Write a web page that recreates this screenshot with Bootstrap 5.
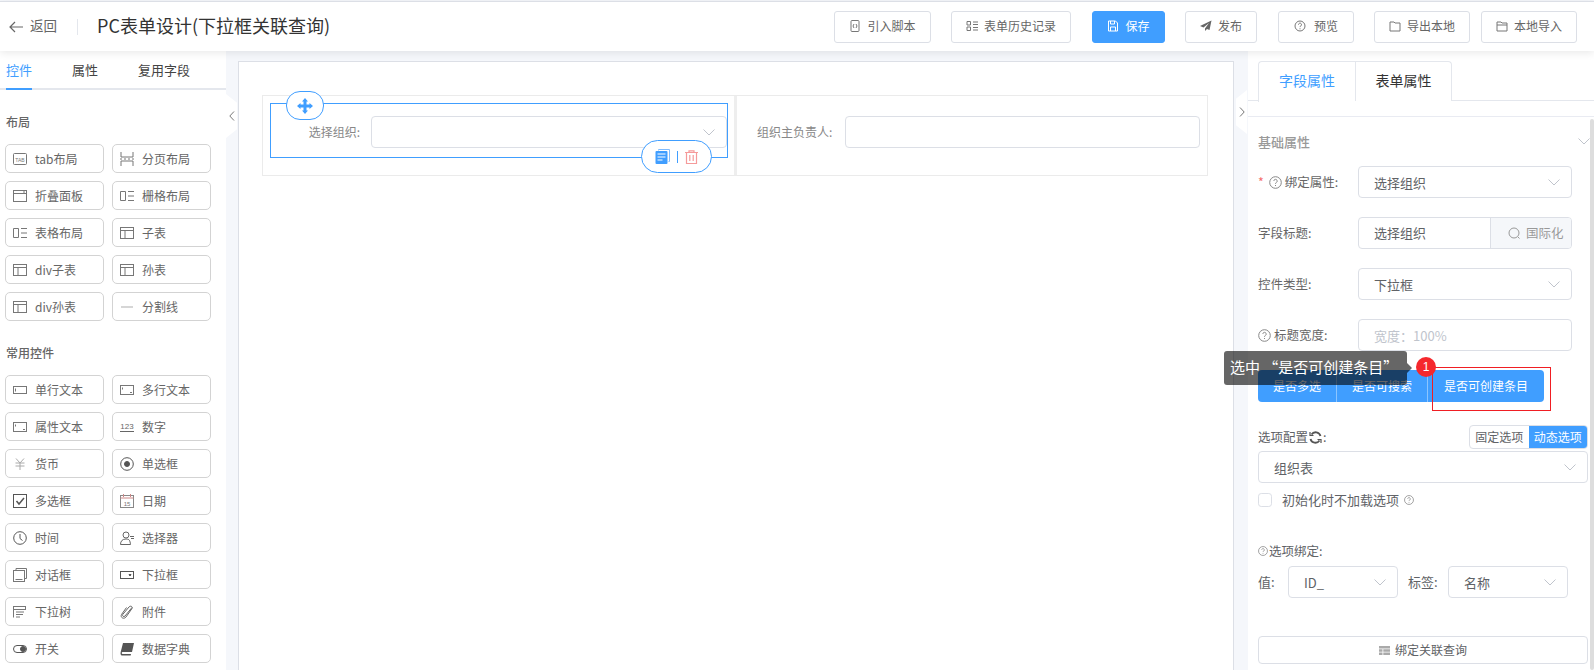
<!DOCTYPE html>
<html lang="zh">
<head>
<meta charset="utf-8">
<title>PC表单设计</title>
<link href="https://cdn.jsdelivr.net/npm/bootstrap@5.3.0/dist/css/bootstrap.min.css" rel="stylesheet">
<style>
html,body{height:670px;overflow:hidden}
body{font-family:"Noto Sans CJK SC","Liberation Sans",sans-serif;font-size:13px;color:#606266;background:#f5f7fb}
svg{display:block;flex:none}
.ic{width:14px;height:14px;fill:none;stroke:#777;stroke-width:1}
.topbar{height:50px;margin-top:1px;border-top:1px solid #dcdfe6;background:#fff;box-shadow:0 2px 8px rgba(0,0,0,.09);position:relative;z-index:3;padding-left:9px;padding-right:17px}
.back-txt{font-size:13.5px;color:#666;margin-left:7px;margin-bottom:2px}
.vsep{width:1px;height:16px;background:#e4e7ed;margin:0 20px 0 20px}
.page-title{font-size:18px;color:#333;font-weight:400;margin:0 0 3px -1px;line-height:24px}
.hbtn{height:32px;font-size:12px;color:#666;background:#fff;border:1px solid #dcdfe6;border-radius:3px;padding:0 0 2px;display:flex;align-items:center;justify-content:center;gap:6px;line-height:1}
.hbtn.act{background:#409eff;border-color:#409eff;color:#fff}
.hbtn .ic{width:12px;height:12px}
.workspace{height:619px;position:relative}
.leftp{width:226px;background:#fff;overflow:hidden;flex:none}
.ltabs{height:39px;border-bottom:2px solid #e4e7ed;padding-left:6px;gap:40px;font-size:13px}
.ltab{height:39px;line-height:38px;color:#444;margin-bottom:-2px}
.ltab.on{color:#409eff;border-bottom:2px solid #409eff}
.sec-h{font-size:12px;font-weight:500;color:#666;padding-left:6px;line-height:18px}
.wgrid{display:grid;grid-template-columns:99px 99px;column-gap:8px;row-gap:8px;padding-left:5px}
.wbtn{height:29px;border:1px solid #d3d3d3;border-radius:5px;display:flex;align-items:center;gap:8px;padding-left:7px;font-size:12px;color:#666;background:#fff}
.midp{flex:1 1 auto;padding:10px 14px 0 12px;min-width:0}
.canvas{height:640px;background:#fff;border:1px solid #dcdfe6;padding:33px 25px 0 23px}
.frow{height:81px;border:1px solid #ebebeb;position:relative}
.fcell{padding-top:20px}
.fcell.c1{width:474px;border-right:3px solid #eee;padding-right:0}
.flabel{font-size:12px;color:#888;text-align:right;white-space:nowrap}
.box{height:32px;border:1px solid #dcdfe6;border-radius:4px;background:#fff;display:flex;align-items:center;justify-content:space-between;padding:0 11px 0 15px;font-size:13px;color:#606266;line-height:1}
.chev{width:12px;height:7px;fill:none;stroke:#c0c4cc;stroke-width:1}
.selrect{position:absolute;left:7px;top:7px;width:458px;height:55px;border:1px solid #409eff;pointer-events:none}
.pill{position:absolute;background:#fff;border:1px solid #409eff;border-radius:14px;display:flex;align-items:center;justify-content:center}
.pill.mv{left:23px;top:-5px;width:38px;height:29px}
.pill.acts{left:378px;top:44px;width:71px;height:33px;border-radius:17px;gap:7px}
.pill .bar{width:1px;height:12px;background:#409eff}
.rightp{width:346px;flex:none;background:#fff;position:relative;overflow:hidden}
.rtabs{height:50px;border-bottom:1px solid #e4e7ed;padding:10px 0 0 10px}
.rtab{width:97px;height:40px;border:1px solid #e4e7ed;border-bottom:0;font-size:14px;text-align:center;line-height:37px;color:#333;background:#fff}
.rtab.on{color:#409eff;border-radius:4px 0 0 0;border-right:0;height:41px}
.rtab.two{border-radius:0 4px 0 0}
.rbody{margin-top:15px;border-top:1px solid #e9ebf2;padding:0 0 0 10px;position:relative}
.rhead{height:49px;font-size:13px;font-weight:500;color:#999;padding-right:4px}
.frm{height:32px;margin-bottom:19px}
.frm .lb{width:100px;font-size:12.5px;color:#666;flex:none;gap:3px}
.frm .box{width:214px}
.req{color:#f56c6c;margin-right:2px}
.q{width:13px;height:13px;fill:none;stroke:#888;stroke-width:1}
.grp{width:214px;height:32px;border:1px solid #dcdfe6;border-radius:4px;overflow:hidden}
.grp .val{flex:1 1 auto;padding-left:15px;color:#606266}
.grp .i18n{width:81px;background:#f5f7fa;border-left:1px solid #dcdfe6;color:#999;font-size:12.5px;gap:5px;padding-left:17px}
.ph{color:#c0c4cc}
.bgrp{height:32px;width:286px;border-radius:4px;overflow:hidden}
.bgrp .it{height:32px;background:#409eff;color:#fff;font-size:12px;display:flex;align-items:center;justify-content:center;padding:0}
.bdiv{border-right:1px solid #8cc5ff !important}
.seg{height:24px;border:1px solid #dcdfe6;border-radius:4px;overflow:hidden;font-size:12px;width:119px}
.seg span{flex:1;text-align:center;line-height:22px;color:#606266}
.seg span.on{background:#409eff;color:#fff}
.wide{width:330px}
.chk{width:14px;height:14px;border:1px solid #dcdfe6;border-radius:2px;margin:0 !important;flex:none}
.bindbtn{width:330px;height:28px;border:1px solid #dcdfe6;border-radius:4px;background:#fff;font-size:12px;color:#606266;display:flex;align-items:center;justify-content:center;gap:5px;padding:0;margin-top:37px}
.sbar{position:absolute;right:0;top:68px;bottom:0;width:4px;background:#ddd;border-radius:2px}
.handle{position:absolute;width:11px;height:44px;background:#fff;z-index:2;display:flex;align-items:center;justify-content:center}
.handle.l{left:226px;top:43px;clip-path:polygon(0 0,100% 20%,100% 80%,0 100%)}
.handle.r{left:1236px;top:39px;clip-path:polygon(0 20%,100% 0,100% 100%,0 80%)}
.handle svg{width:6px;height:10px;fill:none;stroke:#777;stroke-width:1}
.tip{position:absolute;left:1224px;top:300px;width:183px;height:34px;background:rgba(0,0,0,.6);color:#fff;font-size:15px;border-radius:3px;padding-left:6px;line-height:31px;z-index:5;white-space:nowrap}
.tip::after{content:"";position:absolute;right:-5px;top:12px;border-left:5px solid rgba(0,0,0,.6);border-top:5px solid transparent;border-bottom:5px solid transparent}
.step{position:absolute;left:1416px;top:306px;width:20px;height:20px;border-radius:50%;background:#f5282d;color:#fff;font-size:12px;text-align:center;line-height:20px;z-index:6;font-family:"Liberation Sans",sans-serif}
.redbox{position:absolute;left:1432px;top:316px;width:119px;height:44px;border:1px solid #f01e23;z-index:5;pointer-events:none}
</style>
</head>
<body>
<header class="topbar d-flex align-items-center">
  <svg width="14" height="12" viewBox="0 0 14 12" style="fill:none;stroke:#666;stroke-width:1.2"><path d="M6 1 1 6l5 5M1 6h13"/></svg>
  <span class="back-txt">返回</span>
  <span class="vsep"></span>
  <h1 class="page-title">PC表单设计(下拉框关联查询)</h1>
  <div class="ms-auto d-flex">
    <button class="btn hbtn" style="width:97px"><svg class="ic" viewBox="0 0 12 12"><rect x="2" y=".5" width="8" height="11" rx="1"/><path d="M5 4l-1 2 1 2M7 4l1 2-1 2"/></svg>引入脚本</button>
    <button class="btn hbtn" style="width:120px;margin-left:20px"><svg class="ic" viewBox="0 0 12 12"><path d="M1 1.500h3.500v3.500H1zM1 7h3.500v3.500H1zM7 2h5M7 4.500h5M7 7.500h5M7 10h5"/></svg>表单历史记录</button>
    <button class="btn hbtn act" style="width:73px;margin-left:21px"><svg class="ic" viewBox="0 0 12 12" style="stroke:#fff"><path d="M1.500 1h7l2 2v8h-9z"/><path d="M3.500 1v3h4V1M3.500 11V7h5v4"/></svg>保存</button>
    <button class="btn hbtn" style="width:72px;margin-left:20px"><svg class="ic" viewBox="0 0 12 12" style="fill:#666;stroke:none"><path d="M11.500.5 0 6l3.500 1.500L9 3 5 8.500V11l2-2 2.500 1z"/></svg>发布</button>
    <button class="btn hbtn" style="width:76px;margin-left:21px;gap:8px"><svg class="ic" viewBox="0 0 12 12"><circle cx="6" cy="6" r="5"/><path d="M4.500 4.600a1.500 1.500 0 1 1 2.300 1.300c-.5.300-.8.600-.8 1.200M6 8.300v1"/></svg>预览</button>
    <button class="btn hbtn" style="width:96px;margin-left:20px"><svg class="ic" viewBox="0 0 12 12"><path d="M1 2h4l1 1h5v8H1z"/></svg>导出本地</button>
    <button class="btn hbtn" style="width:96px;margin-left:11px"><svg class="ic" viewBox="0 0 12 12"><path d="M1 2h4l1 1h5v8H1zM1 5h10"/></svg>本地导入</button>
  </div>
</header>

<main class="workspace d-flex">
  <aside class="leftp">
    <div class="ltabs d-flex">
      <div class="ltab on">控件</div>
      <div class="ltab">属性</div>
      <div class="ltab">复用字段</div>
    </div>
    <div class="sec-h" style="margin-top:23px;margin-bottom:13px">布局</div>
    <div class="wgrid">
      <div class="wbtn"><svg class="ic" viewBox="0 0 14 14"><rect x=".5" y="1.500" width="13" height="11" rx="1"/><text x="7" y="9.500" font-size="5" text-anchor="middle" fill="#777" stroke="none" font-family="Liberation Sans">TAB</text></svg>tab布局</div>
      <div class="wbtn"><svg class="ic" viewBox="0 0 14 14"><path d="M1 0v5h12V0M1 14V9h12v5M0 7h2M4 7h2M8 7h2M12 7h2"/></svg>分页布局</div>
      <div class="wbtn"><svg class="ic" viewBox="0 0 14 14"><rect x=".5" y="1.500" width="13" height="11"/><path d="M.5 4.500h13M10 3h2"/></svg>折叠面板</div>
      <div class="wbtn"><svg class="ic" viewBox="0 0 14 14"><path d="M.5 2.500h5v9h-5zM8 2.500h6M8 7h6M8 11.500h6"/></svg>栅格布局</div>
      <div class="wbtn"><svg class="ic" viewBox="0 0 14 14"><path d="M.5 2.500h5v9h-5zM8 2.500h6M8 7h6M8 11.500h6"/></svg>表格布局</div>
      <div class="wbtn"><svg class="ic" viewBox="0 0 14 14"><rect x=".5" y="1.500" width="13" height="11"/><path d="M.5 4.500h13M5 4.500v8"/></svg>子表</div>
      <div class="wbtn"><svg class="ic" viewBox="0 0 14 14"><rect x=".5" y="1.500" width="13" height="11"/><path d="M.5 4.500h13M5 4.500v8"/></svg>div子表</div>
      <div class="wbtn"><svg class="ic" viewBox="0 0 14 14"><rect x=".5" y="1.500" width="13" height="11"/><path d="M.5 4.500h13M5 4.500v8"/></svg>孙表</div>
      <div class="wbtn"><svg class="ic" viewBox="0 0 14 14"><rect x=".5" y="1.500" width="13" height="11"/><path d="M.5 4.500h13M5 4.500v8"/></svg>div孙表</div>
      <div class="wbtn"><svg class="ic" viewBox="0 0 14 14" style="stroke:#bbb;stroke-width:1.200"><path d="M1 7h12"/></svg>分割线</div>
    </div>
    <div class="sec-h" style="margin-top:23px;margin-bottom:13px">常用控件</div>
    <div class="wgrid">
      <div class="wbtn"><svg class="ic" viewBox="0 0 14 14"><rect x=".5" y="3.500" width="13" height="7"/><path d="M2.500 5.500v3"/></svg>单行文本</div>
      <div class="wbtn"><svg class="ic" viewBox="0 0 14 14"><rect x=".5" y="2.500" width="13" height="9"/><path d="M2.500 4.500v2M10 9.500h2"/></svg>多行文本</div>
      <div class="wbtn"><svg class="ic" viewBox="0 0 14 14"><rect x=".5" y="2.500" width="13" height="9"/><path d="M2.500 4.500v2M10 9.500h2"/></svg>属性文本</div>
      <div class="wbtn"><svg class="ic" viewBox="0 0 14 14" style="stroke:#666"><text x="7" y="9" font-size="8" text-anchor="middle" fill="#666" stroke="none" font-family="Liberation Sans">123</text><path d="M0 11.500h14"/></svg>数字</div>
      <div class="wbtn"><svg class="ic" viewBox="0 0 14 14" style="stroke:#aaa"><path d="M3 1.500 7 6l4-4.500M2.500 6h9M2.500 9h9M7 6v7"/></svg>货币</div>
      <div class="wbtn"><svg class="ic" viewBox="0 0 14 14" style="stroke:#555"><circle cx="7" cy="7" r="6.300"/><circle cx="7" cy="7" r="2.500" fill="#555"/></svg>单选框</div>
      <div class="wbtn"><svg class="ic" viewBox="0 0 14 14" style="stroke:#555"><rect x=".5" y=".5" width="13" height="13"/><path d="m3.500 7 2.500 3 5-6" stroke-width="1.500"/></svg>多选框</div>
      <div class="wbtn"><svg class="ic" viewBox="0 0 14 14" style="stroke:#888"><rect x=".5" y="1.500" width="13" height="12"/><path d="M.5 4h13M3.500 0v3M10.500 0v3" stroke="#c88"/><text x="7" y="11.500" font-size="6" text-anchor="middle" fill="#777" stroke="none" font-family="Liberation Sans">15</text></svg>日期</div>
      <div class="wbtn"><svg class="ic" viewBox="0 0 14 14" style="stroke:#555"><circle cx="7" cy="7" r="6.300"/><path d="M7 3v4.500l2.500 2"/></svg>时间</div>
      <div class="wbtn"><svg class="ic" viewBox="0 0 14 14" style="stroke:#666"><circle cx="6" cy="4" r="3"/><path d="M.5 13.500c0-3.500 2-5.500 5.500-5.500s4 1.500 4.500 5.500zM10 5.500h4M11 7.500h3"/></svg>选择器</div>
      <div class="wbtn"><svg class="ic" viewBox="0 0 14 14"><rect x=".5" y="2.500" width="11" height="11"/><path d="M3 2.500V.5h10.500v10h-2M2.500 11.500h7" /></svg>对话框</div>
      <div class="wbtn"><svg class="ic" viewBox="0 0 14 14" style="stroke:#555"><rect x=".5" y="3.500" width="13" height="7"/><path d="M9 6.500h2l-1 1.500z" fill="#555"/></svg>下拉框</div>
      <div class="wbtn"><svg class="ic" viewBox="0 0 14 14"><rect x=".5" y="1.500" width="12" height="3"/><path d="M.5 4.500v8M3 7h8M3 9.500h7M3 12h4"/></svg>下拉树</div>
      <div class="wbtn"><svg class="ic" viewBox="0 0 14 14" style="stroke:#666"><path d="M12 2.500 5 11c-1 1.300-3 .3-2.300-1.500L9 2c1.500-1.800 4-.300 3 1.500L6 12c-2 2.500-6 .800-4.500-2.500l5-7"/></svg>附件</div>
      <div class="wbtn"><svg class="ic" viewBox="0 0 14 14" style="stroke:#555"><rect x=".5" y="3.500" width="13" height="7" rx="3.500"/><circle cx="10" cy="7" r="2.500" fill="#555"/></svg>开关</div>
      <div class="wbtn"><svg class="ic" viewBox="0 0 14 14" style="fill:#555;stroke:none"><path d="M3 1h11l-2 9H2.500c-1 0-1 2 0 2H11l-.3 1.500H2C.5 13.500.3 11.500.7 10z"/></svg>数据字典</div>
    </div>
  </aside>

  <section class="midp">
    <div class="canvas">
      <div class="frow d-flex">
        <div class="fcell c1 d-flex">
          <div class="flabel" style="width:97px;padding-top:7px">选择组织:</div>
          <div class="box" style="width:356px;margin-left:11px"><span></span><svg class="chev" viewBox="0 0 12 7"><path d="m.5.500 5.500 5.500 5.500-5.500"/></svg></div>
        </div>
        <div class="fcell d-flex" style="flex:1 1 auto">
          <div class="flabel" style="padding-left:20px;padding-top:7px;width:108px;text-align:left">组织主负责人:</div>
          <div class="box" style="width:355px"></div>
        </div>
        <div class="selrect"></div>
        <div class="pill mv"><svg width="16" height="16" viewBox="0 0 16 16" style="fill:#409eff"><path d="M8 0 11 3.500H9.500V6.500H12.500V5L16 8l-3.500 3V9.500H9.500v3H11L8 16l-3-3.500h1.500V9.500H3.500V11L0 8l3.500-3v1.500h3V3.500H5z"/></svg></div>
        <div class="pill acts">
          <svg width="15" height="15" viewBox="0 0 15 15"><path d="M3.500 1.500V.5h11v12h-1" fill="none" stroke="#80bcff"/><rect x=".5" y="2" width="12" height="13" rx="1" fill="#409eff"/><path d="M2.500 5h8M2.500 8h8M2.500 11h5" stroke="#fff"/></svg>
          <span class="bar"></span>
          <svg width="13" height="14" viewBox="0 0 13 14" style="fill:none;stroke:#f59a9a;stroke-width:1.200"><path d="M0 2.500h13M4 2.500V.8h5v1.700M1.500 2.500v11h10v-11M4.800 5v6M8.200 5v6"/></svg>
        </div>
      </div>
    </div>
  </section>

  <aside class="rightp">
    <div class="rtabs d-flex"><div class="rtab on">字段属性</div><div class="rtab two">表单属性</div></div>
    <div class="rbody">
      <div class="rhead d-flex align-items-center justify-content-between"><span>基础属性</span><svg class="chev" viewBox="0 0 12 7"><path d="m.5.500 5.500 5.500 5.500-5.500"/></svg></div>
      <div class="frm d-flex align-items-center">
        <div class="lb d-flex align-items-center"><span class="req">*</span><svg class="q" viewBox="0 0 13 13"><circle cx="6.500" cy="6.500" r="5.800"/><path d="M4.800 5a1.700 1.700 0 1 1 2.600 1.500c-.6.300-.9.700-.9 1.300M6.500 9v1"/></svg><span>绑定属性:</span></div>
        <div class="box"><span>选择组织</span><svg class="chev" viewBox="0 0 12 7"><path d="m.5.500 5.500 5.500 5.500-5.500"/></svg></div>
      </div>
      <div class="frm d-flex align-items-center">
        <div class="lb">字段标题:</div>
        <div class="grp d-flex"><div class="val d-flex align-items-center">选择组织</div><div class="i18n d-flex align-items-center"><svg class="q" width="12" height="12" viewBox="0 0 13 13" style="stroke:#999"><circle cx="6" cy="6" r="5"/><path d="m10 10 1.500 1.500"/></svg>国际化</div></div>
      </div>
      <div class="frm d-flex align-items-center">
        <div class="lb">控件类型:</div>
        <div class="box"><span>下拉框</span><svg class="chev" viewBox="0 0 12 7"><path d="m.5.500 5.500 5.500 5.500-5.500"/></svg></div>
      </div>
      <div class="frm d-flex align-items-center">
        <div class="lb d-flex align-items-center"><svg class="q" viewBox="0 0 13 13"><circle cx="6.500" cy="6.500" r="5.800"/><path d="M4.800 5a1.700 1.700 0 1 1 2.600 1.500c-.6.300-.9.700-.9 1.300M6.500 9v1"/></svg><span>标题宽度:</span></div>
        <div class="box"><span class="ph">宽度：100%</span></div>
      </div>
      <div class="bgrp d-flex">
        <button class="btn it rounded-0 border-0 bdiv" style="width:79px">是否多选</button>
        <button class="btn it rounded-0 border-0 bdiv" style="width:91px">是否可搜索</button>
        <button class="btn it rounded-0 border-0" style="width:116px">是否可创建条目</button>
      </div>
      <div class="wide d-flex align-items-center justify-content-between" style="margin-top:23px;height:24px">
        <div class="d-flex align-items-center" style="gap:1px;font-size:12.5px"><span>选项配置</span><svg width="13" height="13" viewBox="0 0 13 13" style="fill:none;stroke:#555;stroke-width:1.800"><path d="M11.500 5A5 5 0 0 0 2.500 3.500M1.500 8a5 5 0 0 0 9 1.500"/><path d="M1 1v3.500h3.500M12 12V8.500H8.500" stroke-width="1.200"/></svg><span>:</span></div>
        <div class="seg d-flex"><span>固定选项</span><span class="on">动态选项</span></div>
      </div>
      <div class="box wide" style="margin-top:2px"><span>组织表</span><svg class="chev" viewBox="0 0 12 7"><path d="m.5.500 5.500 5.500 5.500-5.500"/></svg></div>
      <div class="d-flex align-items-center" style="margin-top:10px;height:14px;font-size:13px">
        <input class="form-check-input chk" type="checkbox" aria-label="初始化时不加载选项">
        <span style="margin-left:10px">初始化时不加载选项</span>
        <svg class="q" style="width:10px;height:10px;margin-left:5px" viewBox="0 0 13 13"><circle cx="6.500" cy="6.500" r="5.800"/><path d="M4.800 5a1.700 1.700 0 1 1 2.600 1.500c-.6.300-.9.700-.9 1.300M6.500 9v1"/></svg>
      </div>
      <div class="d-flex align-items-center" style="margin-top:36px;height:16px;font-size:12.500px;gap:1px"><svg class="q" style="width:10px;height:10px" viewBox="0 0 13 13"><circle cx="6.500" cy="6.500" r="5.800"/><path d="M4.800 5a1.700 1.700 0 1 1 2.600 1.500c-.6.300-.9.700-.9 1.300M6.500 9v1"/></svg><span>选项绑定:</span></div>
      <div class="d-flex align-items-center" style="margin-top:7px;height:32px">
        <span style="width:30px">值:</span>
        <div class="box" style="width:110px"><span>ID_</span><svg class="chev" viewBox="0 0 12 7"><path d="m.5.500 5.500 5.500 5.500-5.500"/></svg></div>
        <span style="width:50px;padding-left:10px">标签:</span>
        <div class="box" style="width:120px"><span>名称</span><svg class="chev" viewBox="0 0 12 7"><path d="m.5.500 5.500 5.500 5.500-5.500"/></svg></div>
      </div>
      <button class="btn bindbtn" style="margin-top:38px"><svg width="11" height="9" viewBox="0 0 11 9" style="fill:#aaa"><path d="M0 0h11v2.500H0zM0 3.300h3.500v2.400H0zM4.300 3.300H11v2.400H4.300zM0 6.500h3.500V9H0zM4.300 6.500H11V9H4.300z"/></svg>绑定关联查询</button>
    </div>
    <div class="sbar"></div>
  </aside>

  <div class="handle l"><svg viewBox="0 0 6 10"><path d="M5 .5.800 5 5 9.500"/></svg></div>
  <div class="handle r"><svg viewBox="0 0 6 10"><path d="M1 .5 5.200 5 1 9.500"/></svg></div>
  <div class="tip">选中 “是否可创建条目”</div>
  <div class="step">1</div>
  <div class="redbox"></div>
</main>
</body>
</html>
